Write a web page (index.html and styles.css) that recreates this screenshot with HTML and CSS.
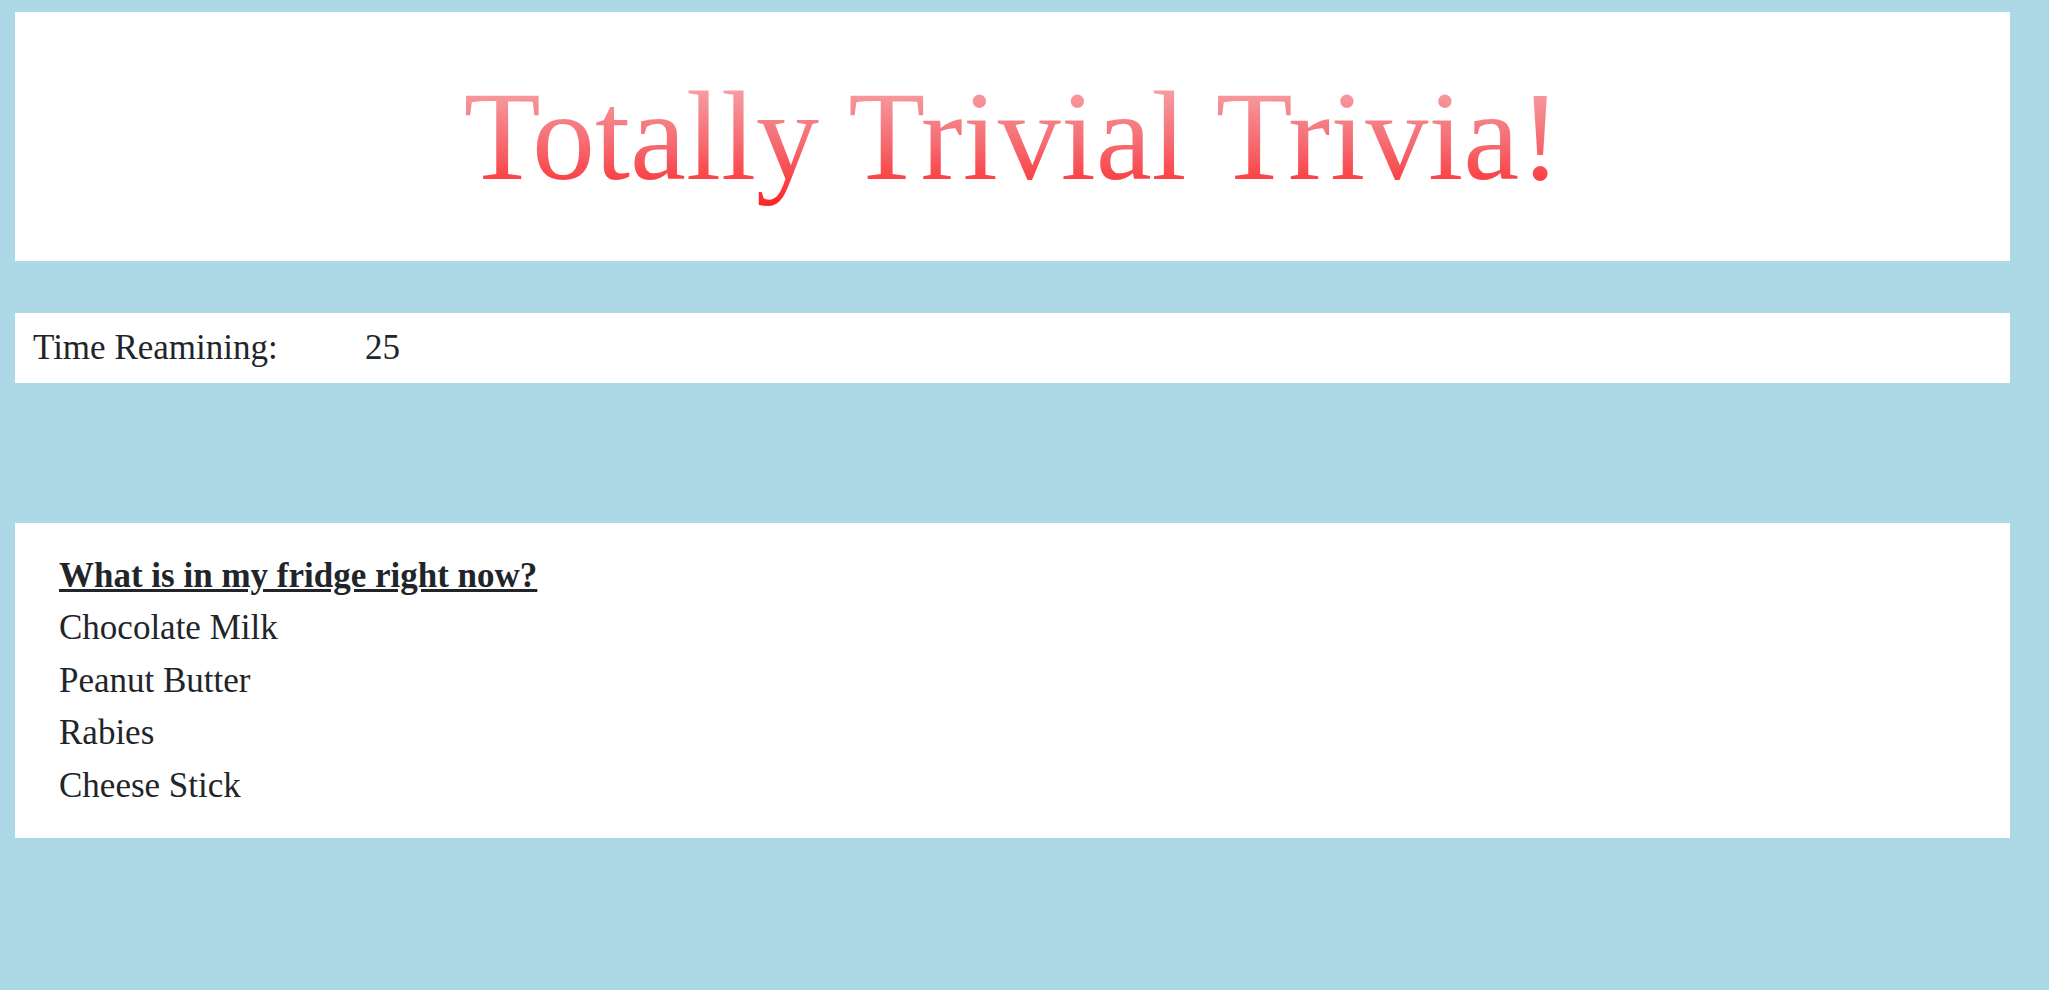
FILE: index.html
```html
<!DOCTYPE html>
<html lang="en">
<head>
<meta charset="utf-8">
<title>Totally Trivial Trivia!</title>
<link rel="stylesheet" href="styles.css">
</head>
<body>
  <header class="banner">
    <h1 class="title">Totally Trivial Trivia!</h1>
  </header>
  <section class="timer">
    <span class="timer-label">Time Reamining:</span>
    <span class="timer-value">25</span>
  </section>
  <section class="question-card">
    <div class="question">What is in my fridge right now?</div>
    <div class="answer">Chocolate Milk</div>
    <div class="answer">Peanut Butter</div>
    <div class="answer">Rabies</div>
    <div class="answer">Cheese Stick</div>
  </section>
</body>
</html>
```
FILE: styles.css
```css
html, body {
  margin: 0;
  height: 100%;
}
body {
  background: #add8e6;
  padding: 12px 39px 0 15px;
  box-sizing: border-box;
  font-family: "Liberation Serif", "Times New Roman", serif;
  color: #212529;
  font-size: 35px;
}
.banner {
  background: #fff;
  height: 249px;
  display: flex;
  align-items: center;
  justify-content: center;
}
.title {
  margin: 0;
  font-size: 126px;
  font-weight: normal;
  line-height: normal;
  background: linear-gradient(to bottom, #f7b3b8 0%, #f56a70 55%, #ff2020 100%);
  -webkit-background-clip: text;
  background-clip: text;
  color: transparent;
}
.timer {
  margin-top: 52px;
  background: #fff;
  height: 70px;
  padding-left: 18px;
  line-height: 70px;
  display: flex;
}
.timer-label {
  width: 332px;
  flex: none;
}
.question-card {
  margin-top: 140px;
  background: #fff;
  padding: 27px 44px 26px;
  line-height: 52.4px;
}
.question {
  font-weight: bold;
  text-decoration: underline;
}
```
